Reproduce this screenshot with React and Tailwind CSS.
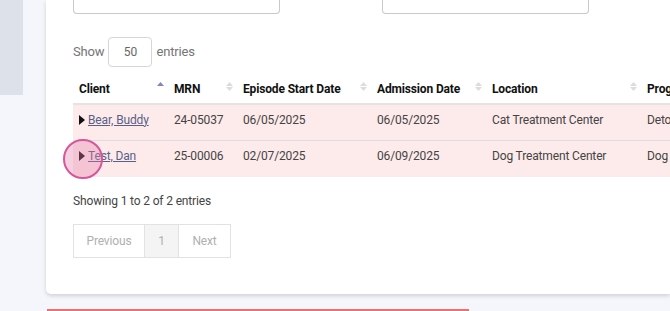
import React from "react";

function SortIcon({ active }) {
  return (
    <span className="flex flex-col items-center gap-[1px] leading-none">
      <svg width="7" height="4" viewBox="0 0 7 4"><path d="M0 4 L3.5 0 L7 4 Z" fill={active ? "#7d84c8" : "#dcdcdc"} /></svg>
      <svg width="7" height="4" viewBox="0 0 7 4"><path d="M0 0 L3.5 4 L7 0 Z" fill={active ? "#ffffff" : "#dcdcdc"} /></svg>
    </span>
  );
}

const cols = [
  { label: "Client", w: "w-[95px]", active: true },
  { label: "MRN", w: "w-[69px]" },
  { label: "Episode Start Date", w: "w-[134px]" },
  { label: "Admission Date", w: "w-[115px]" },
  { label: "Location", w: "w-[155px]" },
  { label: "Program", w: "w-[120px]", noIcon: true },
];

const rows = [
  ["Bear, Buddy", "24-05037", "06/05/2025", "06/05/2025", "Cat Treatment Center", "Detox"],
  ["Test, Dan", "25-00006", "02/07/2025", "06/09/2025", "Dog Treatment Center", "Dog"],
];

export default function App() {
  return (
    <div className="relative w-[670px] h-[311px] overflow-hidden bg-[#f5f6fb] text-[12px] tracking-[-0.15px] text-[#333]" style={{ fontFamily: "Roboto, 'Liberation Sans', sans-serif" }}>
      <div className="flex h-full">
        <div className="w-[23px] shrink-0">
          <div className="h-[95px] bg-[#dde1ea]" />
        </div>
        <div className="ml-[23px] flex-1 min-w-0 flex flex-col">
          <div className="bg-white rounded-bl-[5px] shadow-[0_2px_4px_rgba(0,0,0,0.15)] h-[294px] pl-[27px] relative overflow-hidden">
            <div className="flex gap-[102px]">
              <div className="w-[207px] h-[14px] border border-t-0 border-[#c9c9c9] rounded-b-[4px]" />
              <div className="w-[207px] h-[14px] border border-t-0 border-[#c9c9c9] rounded-b-[4px]" />
            </div>
            <div className="flex items-center mt-[23px] h-[30px] text-[13px] text-[#757575]">
              <span>Show</span>
              <div className="ml-[4px] w-[44px] h-[30px] border border-[#d6d6d6] rounded-[4px] flex items-center justify-center text-[12px] text-[#666]">50</div>
              <span className="ml-[4px]">entries</span>
            </div>
            <div className="mt-[10px] w-[700px]">
              <div className="flex h-[28px] border-b-2 border-[#e4e4e4] font-bold text-[#111]">
                {cols.map((c) => (
                  <div key={c.label} className={`${c.w} shrink-0 flex items-start justify-between pl-[6px] pr-[4px] pt-[3px]`}>
                    <span>{c.label}</span>
                    {!c.noIcon && <span className="mt-[2px]"><SortIcon active={c.active} /></span>}
                  </div>
                ))}
              </div>
              {rows.map((r, i) => (
                <div key={i} className={`relative flex h-[36px] items-center pb-[6px] bg-[#fdebeb] text-[#444] ${i === 0 ? "border-b border-[#dedede]" : ""}`}>
                  <div className="w-[95px] shrink-0 pl-[6px] flex items-center">
                    <svg width="6" height="10" viewBox="0 0 6 10" className="mr-[3px]"><path d="M0 0 L6 5 L0 10 Z" fill="#111" /></svg>
                    <span className="underline text-[#5a5f88]">{r[0]}</span>
                  </div>
                  <div className="w-[69px] shrink-0 pl-[6px]">{r[1]}</div>
                  <div className="w-[134px] shrink-0 pl-[6px]">{r[2]}</div>
                  <div className="w-[115px] shrink-0 pl-[6px]">{r[3]}</div>
                  <div className="w-[155px] shrink-0 pl-[6px]">{r[4]}</div>
                  <div className="w-[120px] shrink-0 pl-[6px]">{r[5]}</div>
                  {i === 1 && (
                    <span className="absolute left-[-10px] top-[-2px] w-[40px] h-[40px] rounded-full bg-[rgba(225,120,170,0.35)] border-2 border-[#d5569a]" />
                  )}
                </div>
              ))}
            </div>
            <div className="mt-[15px] text-[#444]">Showing 1 to 2 of 2 entries</div>
            <div className="mt-[14px] flex h-[34px] w-fit border border-[#e2e2e2] text-[#b0b0b0]">
              <div className="w-[71px] flex items-center justify-center border-r border-[#e2e2e2]">Previous</div>
              <div className="w-[34px] flex items-center justify-center bg-[#f4f4f4] border-r border-[#e2e2e2]">1</div>
              <div className="w-[51px] flex items-center justify-center">Next</div>
            </div>
          </div>
          <div className="mt-[15px] ml-[1px] w-[422px] h-[2px] bg-[#e57373]" />
        </div>
      </div>
    </div>
  );
}
